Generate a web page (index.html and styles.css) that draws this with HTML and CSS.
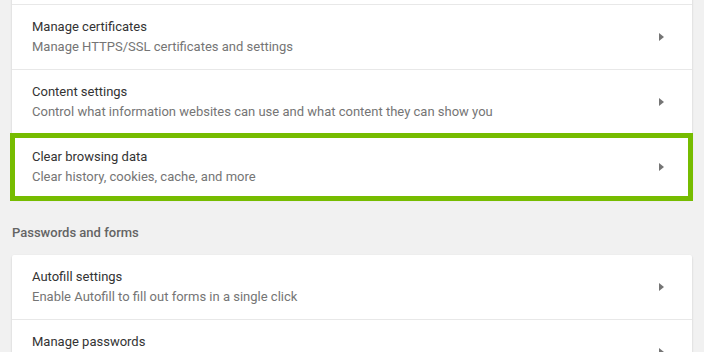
FILE: index.html
```html
<!DOCTYPE html>
<html lang="en">
<head>
    <meta charset="UTF-8">
    <title>Settings</title>
    <link rel="stylesheet" href="styles.css">
</head>
<body>
    <div class="page">
        <div class="card card-top">
            <div class="row">
                <div class="row-text">
                    <div class="row-title">Manage certificates</div>
                    <div class="row-sub">Manage HTTPS/SSL certificates and settings</div>
                </div>
                <span class="arrow"></span>
            </div>
            <div class="row">
                <div class="row-text">
                    <div class="row-title">Content settings</div>
                    <div class="row-sub">Control what information websites can use and what content they can show you</div>
                </div>
                <span class="arrow"></span>
            </div>
            <div class="row highlighted">
                <div class="row-text">
                    <div class="row-title">Clear browsing data</div>
                    <div class="row-sub">Clear history, cookies, cache, and more</div>
                </div>
                <span class="arrow"></span>
            </div>
        </div>

        <h2 class="section-title">Passwords and forms</h2>

        <div class="card">
            <div class="row">
                <div class="row-text">
                    <div class="row-title">Autofill settings</div>
                    <div class="row-sub">Enable Autofill to fill out forms in a single click</div>
                </div>
                <span class="arrow"></span>
            </div>
            <div class="row">
                <div class="row-text">
                    <div class="row-title">Manage passwords</div>
                    <div class="row-sub">Offer to save your web passwords</div>
                </div>
                <span class="arrow"></span>
            </div>
        </div>
    </div>
</body>
</html>
```

FILE: styles.css
```css
html, body {
    margin: 0;
    padding: 0;
    overflow: hidden;
}
body {
    font-family: Roboto, 'Noto Sans', sans-serif;
    font-size: 13px;
    line-height: 20px;
    background-color: #f1f1f1;
    color: #333;
}
.page {
    padding: 0 12px;
}
.card {
    background: white;
    border-radius: 2px;
    box-shadow: 0 1px 2px rgba(0,0,0,0.12), 0 1px 3px rgba(0,0,0,0.06);
}
/* list is scrolled: the card's top lies above the window */
.card-top {
    margin-top: -8px;
    padding-top: 12px;
}
.row {
    position: relative;
    display: flex;
    align-items: center;
    height: 65px;
    padding: 0 28px 0 20px;
    box-sizing: border-box;
    border-top: 1px solid #e8e8e8;
}
.card:not(.card-top) .row:first-child {
    border-top: none;
    height: 64px;
}
.row-text {
    flex: 1;
    min-width: 0;
}
.row-title {
    color: #333;
}
.row-sub {
    color: #757575;
}
.arrow {
    width: 0;
    height: 0;
    border-left: 5px solid #757575;
    border-top: 4px solid transparent;
    border-bottom: 4px solid transparent;
    margin-top: -1px;
}
.highlighted::after {
    content: "";
    position: absolute;
    top: -2px;
    left: -2px;
    right: -1px;
    bottom: -2px;
    border: 5px solid #76bc00;
    pointer-events: none;
}
.section-title {
    margin: 0;
    padding: 24px 0 12px;
    font-size: 13px;
    line-height: 20px;
    font-weight: 500;
    color: #646464;
}
```
